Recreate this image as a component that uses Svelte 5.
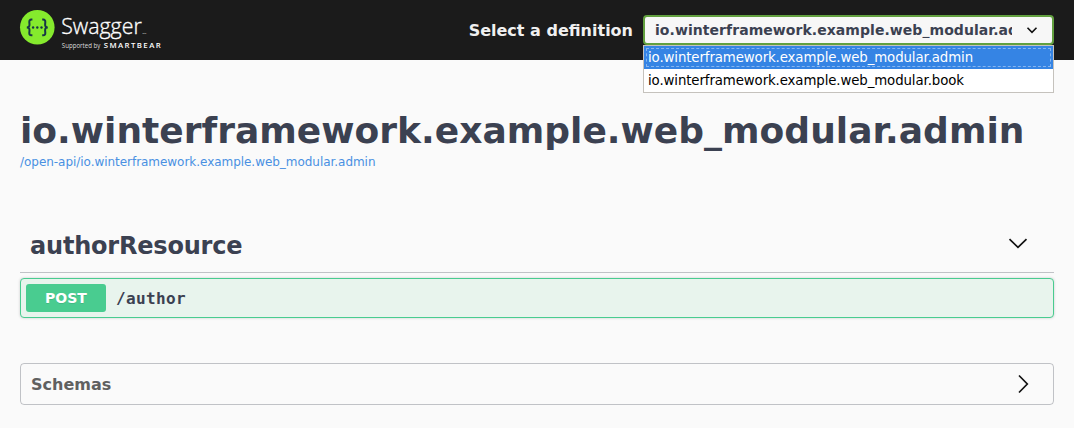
<script>
  const definitions = [
    'io.winterframework.example.web_modular.admin',
    'io.winterframework.example.web_modular.book'
  ];
  let selected = $state(definitions[0]);
</script>

<div class="page">
  <header class="topbar">
    <svg class="logo" width="142" height="42" viewBox="0 0 142 42" aria-label="Swagger">
      <circle cx="17.3" cy="17.3" r="17.3" fill="#85ea2d" />
      <g fill="none" stroke="#173647" stroke-width="2">
        <path d="M12.4 9.6H11.4C9.8 9.6 9.2 10.6 9.3 12.1L9.5 14.3C9.6 16.4 8.7 17.4 6.8 17.4C8.7 17.4 9.6 18.4 9.5 20.5L9.3 22.8C9.2 24.4 9.8 25.3 11.4 25.3H12.4" />
        <path d="M22.2 9.6H23.2C24.8 9.6 25.4 10.6 25.3 12.1L25.1 14.3C25 16.4 25.9 17.4 27.8 17.4C25.9 17.4 25 18.4 25.1 20.5L25.3 22.8C25.4 24.4 24.8 25.3 23.2 25.3H22.2" />
      </g>
      <g fill="#173647">
        <circle cx="13.1" cy="17.5" r="1.2" />
        <circle cx="17.3" cy="17.5" r="1.2" />
        <circle cx="21.5" cy="17.5" r="1.2" />
      </g>
      <g fill="#fff">
        <text class="brand" x="41.2" y="24" textLength="80.5" lengthAdjust="spacingAndGlyphs">Swagger</text>
        <text class="tm" x="122.5" y="24">TM</text>
        <text class="support" x="41.8" y="38" textLength="38.5" lengthAdjust="spacingAndGlyphs">Supported by</text>
        <text class="smart" x="83.7" y="38" textLength="57" lengthAdjust="spacing">SMARTBEAR</text>
      </g>
    </svg>
    <div class="picker">
      <span class="label">Select a definition</span>
      <div class="select">
        <div class="box">
          <span class="value">{selected}</span>
          <svg width="12" height="8" viewBox="0 0 12 8"><path d="M1.5 1.8L6 6.3L10.5 1.8" fill="none" stroke="#111" stroke-width="1.6" /></svg>
        </div>
        <div class="menu" role="listbox">
          {#each definitions as name}
            <div class="option" class:active={name === selected} role="option" tabindex="-1" aria-selected={name === selected}
              onclick={() => (selected = name)} onkeydown={(e) => e.key === 'Enter' && (selected = name)}>{name}</div>
          {/each}
        </div>
      </div>
    </div>
  </header>

  <main>
    <h1>{definitions[0]}</h1>
    <a class="link" href="#spec">/open-api/{definitions[0]}</a>

    <section class="tag">
      <h2>authorResource</h2>
      <svg width="20" height="20" viewBox="0 0 20 20"><path d="M1.5 4.2L10 12.4L18.5 4.2" fill="none" stroke="#111" stroke-width="1.7" /></svg>
    </section>
    <div class="operation">
      <span class="method">POST</span>
      <span class="path">/author</span>
    </div>

    <section class="schemas">
      <h3>Schemas</h3>
      <svg width="20" height="20" viewBox="0 0 20 20"><path d="M6 1.5L14.3 10L6 18.5" fill="none" stroke="#111" stroke-width="1.7" /></svg>
    </section>
  </main>
</div>

<style>
  :global(body) { background: #fafafa; }
  * { box-sizing: border-box; }
  .page {
    height: 428px;
    overflow: hidden;
    font-family: "DejaVu Sans", sans-serif;
    color: #3b4151;
  }
  .topbar {
    display: flex;
    justify-content: space-between;
    height: 60px;
    padding: 10px 20px 0;
    background: #1b1b1b;
  }
  .logo { display: block; overflow: visible; }
  .logo text { font-family: "Open Sans", sans-serif; }
  .logo .brand { font-size: 22.5px; font-weight: 300; stroke: #fff; stroke-width: .35px; }
  .logo .tm { font-size: 2.5px; }
  .logo .support { font-size: 6.2px; fill: #ddd; }
  .logo .smart { font-size: 7.8px; font-weight: 600; }
  .picker { display: flex; height: 40px; align-items: center; }
  .label {
    margin-right: 10px;
    font-size: 16px;
    font-weight: 700;
    color: #f0f0f0;
    white-space: nowrap;
  }
  .select { position: relative; width: 411px; }
  .box {
    display: flex;
    align-items: center;
    justify-content: space-between;
    height: 30px;
    padding: 0 14px 0 10px;
    border: 2px solid #62a03f;
    border-radius: 4px;
    background: #f7f7f7;
  }
  .value {
    width: 357px;
    overflow: hidden;
    font-size: 14px;
    font-weight: 700;
    letter-spacing: .055px;
    white-space: nowrap;
  }
  .menu {
    position: absolute;
    top: 30px;
    left: 0;
    width: 411px;
    height: 48px;
    border: 1px solid #c5c2bd;
    background: #fff;
    color: #000;
  }
  .option {
    height: 23px;
    padding-left: 4px;
    font-size: 13.333px;
    letter-spacing: -.11px;
    line-height: 23px;
    white-space: nowrap;
  }
  .option.active {
    background: #3584e4;
    color: #fff;
    outline: 1px dashed #86b5ef;
    outline-offset: -3px;
  }
  main { padding: 50px 20px 0; }
  h1, h2, h3 { margin: 0; }
  h1 { font-size: 36px; line-height: 42px; letter-spacing: .02px; white-space: nowrap; }
  .link {
    display: block;
    font-size: 12px;
    letter-spacing: -.04px;
    line-height: 20px;
    color: #4990e2;
    text-decoration: none;
  }
  .tag {
    display: flex;
    align-items: center;
    justify-content: space-between;
    height: 55px;
    margin-top: 46px;
    padding: 0 26px 0 10px;
    border-bottom: 1px solid rgba(59, 65, 81, .3);
  }
  h2 { padding-top: 2px; font-size: 24px; letter-spacing: -.2px; line-height: 30px; }
  .operation {
    display: flex;
    align-items: center;
    height: 40px;
    margin-top: 5px;
    padding: 0 5px;
    border: 1px solid #49cc90;
    border-radius: 4px;
    background: #e8f4ed;
    box-shadow: 0 0 3px rgba(0, 0, 0, .19);
  }
  .method {
    width: 80px;
    height: 28px;
    border-radius: 3px;
    background: #49cc90;
    color: #fff;
    font-size: 14px;
    font-weight: 700;
    line-height: 28px;
    text-align: center;
    text-shadow: 0 1px 0 rgba(0, 0, 0, .1);
  }
  .path {
    padding-left: 10px;
    font-family: "DejaVu Sans Mono", monospace;
    font-size: 16px;
    font-weight: 700;
    letter-spacing: .37px;
  }
  .schemas {
    display: flex;
    align-items: center;
    justify-content: space-between;
    height: 42px;
    margin-top: 45px;
    padding: 0 20px 0 10px;
    border: 1px solid rgba(59, 65, 81, .3);
    border-radius: 4px;
  }
  h3 { font-size: 16px; color: #606060; }
</style>
